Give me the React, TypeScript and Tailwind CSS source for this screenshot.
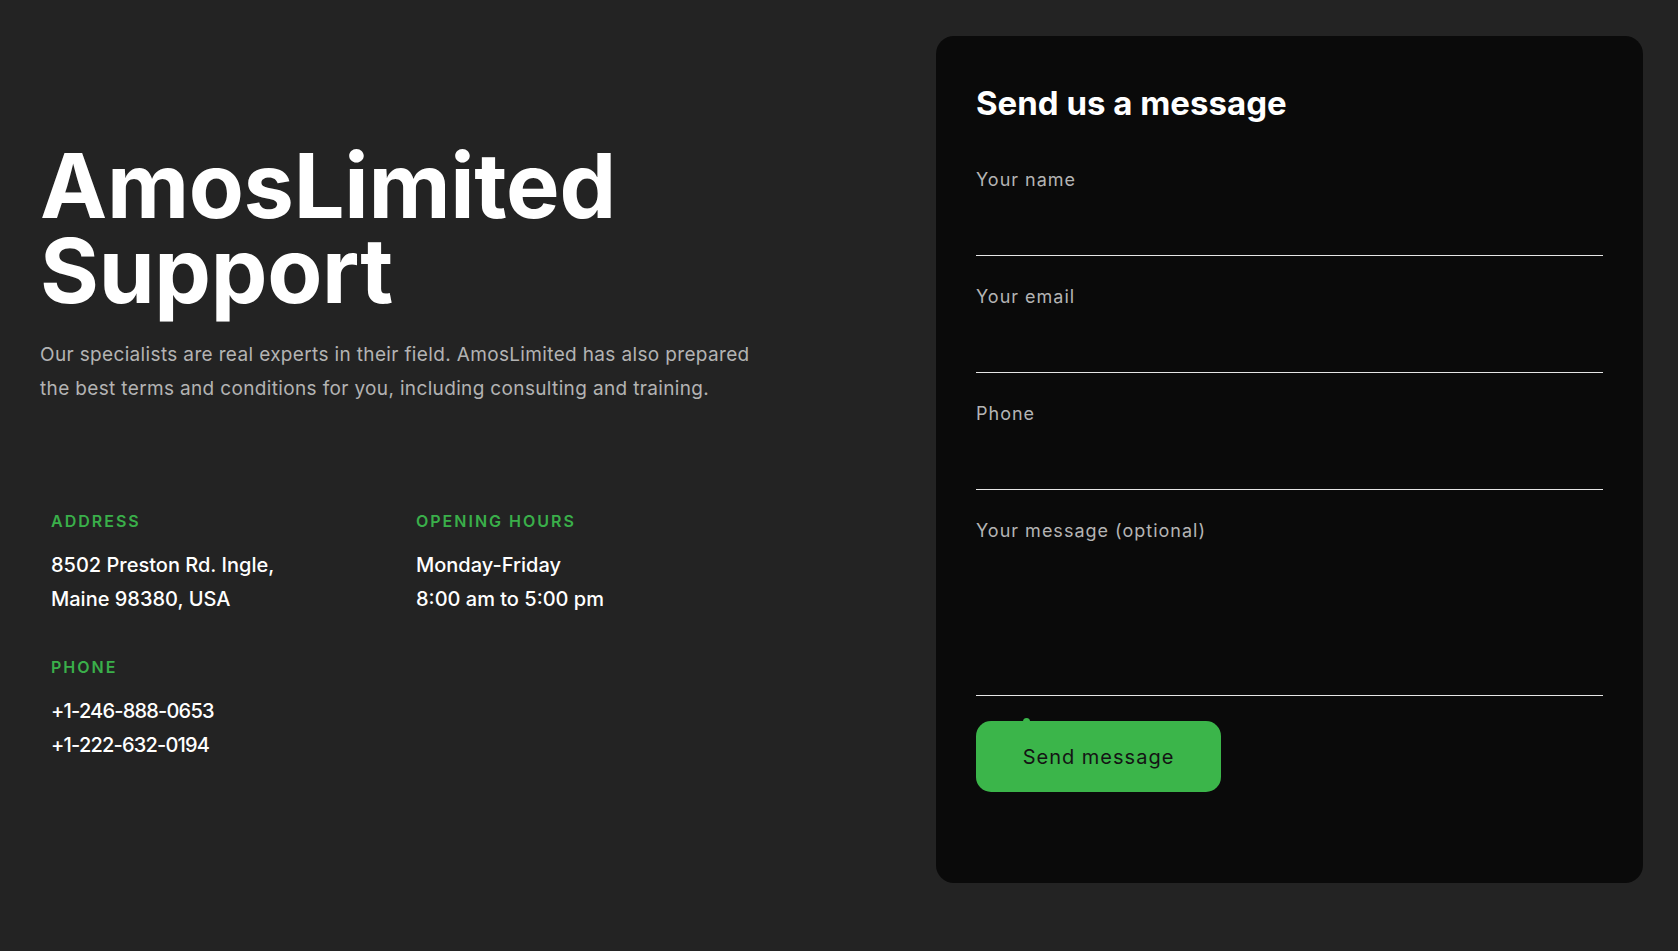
import React from 'react';

const font = { fontFamily: 'Inter, "Noto Sans", sans-serif' };

const Field = ({ label, tall }: { label: string; tall?: boolean }) => (
    <label className="block mb-[29px]">
        <span className="block text-[18px] leading-[24px] text-[#b4b4b4] tracking-[1px]">{label}</span>
        {tall ? (
            <textarea className="block w-full h-[153px] bg-transparent border-b border-[#e6e6e6] outline-none resize-none text-white" />
        ) : (
            <input className="block w-full h-[64px] bg-transparent border-b border-[#e6e6e6] outline-none text-white" />
        )}
    </label>
);

const InfoBlock = ({ title, lines, tight }: { title: string; lines: string[]; tight?: boolean }) => (
    <div>
        <div className="text-[16px] leading-[20px] font-semibold tracking-[2px] text-[#3aaf4a]">{title}</div>
        <div className={`mt-[17px] text-[20px] leading-[34px] font-medium text-white ${tight ? 'tracking-[-0.8px]' : ''}`}>
            {lines.map(l => <div key={l}>{l}</div>)}
        </div>
    </div>
);

export default function App() {
    return (
        <div className="min-h-screen w-full bg-[#232323] flex items-start" style={font}>
            {/* Left intro */}
            <div className="flex-1 pl-[40px] pt-[143px]">
                <h1 className="text-[90px] leading-[85px] font-bold text-white tracking-[-0.3px]">
                    AmosLimited<br />Support
                </h1>
                <p className="mt-[25px] text-[19px] leading-[33.5px] text-[#b3b3b3] tracking-[0.35px]">
                    Our specialists are real experts in their field. AmosLimited has also prepared<br />
                    the best terms and conditions for you, including consulting and training.
                </p>

                <div className="mt-[106px] pl-[11px] grid grid-cols-[365px_1fr] gap-y-[41px]">
                    <InfoBlock title="ADDRESS" lines={['8502 Preston Rd. Ingle,', 'Maine 98380, USA']} />
                    <InfoBlock title="OPENING HOURS" lines={['Monday-Friday', '8:00 am to 5:00 pm']} />
                    <InfoBlock title="PHONE" lines={['+1-246-888-0653', '+1-222-632-0194']} tight />
                </div>
            </div>

            {/* Form card */}
            <div className="mt-[36px] mr-[35px] w-[707px] h-[847px] bg-[#0a0a0a] rounded-[18px] px-[40px] pt-[47px]">
                <h2 className="text-[33px] leading-[40px] font-bold text-white tracking-[0px]">Send us a message</h2>
                <form className="mt-[45px]" onSubmit={e => e.preventDefault()}>
                    <Field label="Your name" />
                    <Field label="Your email" />
                    <Field label="Phone" />
                    <Field label="Your message (optional)" tall />
                    <div className="relative -mt-[4px]">
                        <span className="absolute left-[47px] -top-[3px] w-[7px] h-[4px] rounded-t-full bg-[#3bb54a]" />
                        <button type="submit" className="w-[245px] h-[71px] rounded-[15px] bg-[#3bb54a] text-[20px] text-[#141414] tracking-[1px]">
                            Send message
                        </button>
                    </div>
                </form>
            </div>
        </div>
    );
}
